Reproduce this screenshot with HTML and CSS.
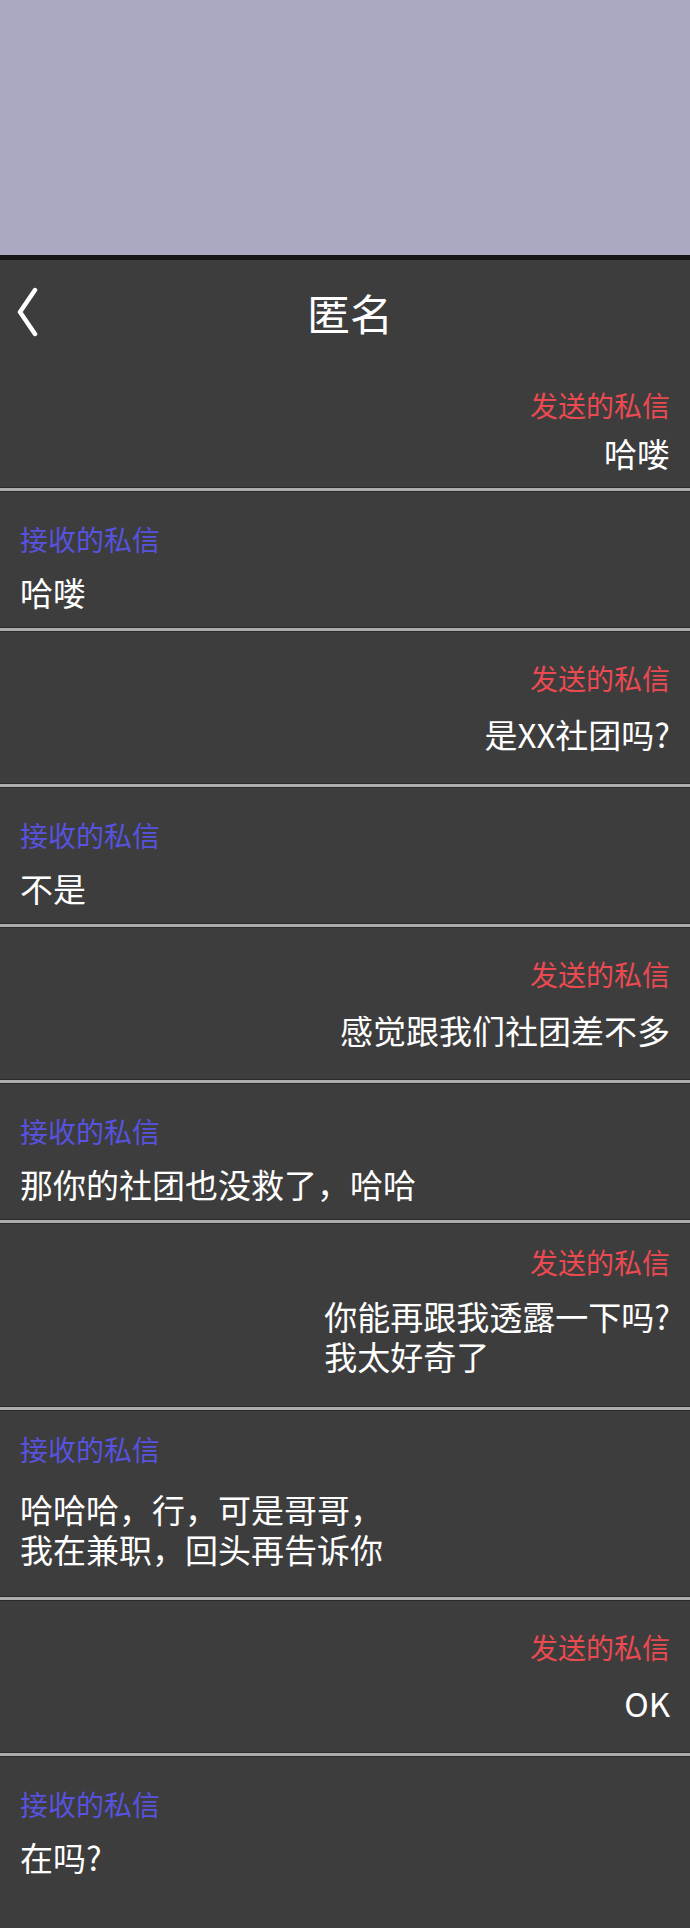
FILE: index.html
```html
<!DOCTYPE html>
<html lang="zh-CN">
<head>
    <meta charset="UTF-8">
    <meta name="viewport" content="width=device-width, initial-scale=1.0">
    <title>匿名</title>
    <link rel="stylesheet" href="styles.css">
</head>
<body>
    <div class="status-area"></div>
    <div class="chat">
        <div class="topbar">
            <a class="back" href="#">
                <svg width="24" height="50" viewBox="0 0 24 50">
                    <polyline points="18,3 3,25 18,47" fill="none" stroke="#ffffff" stroke-width="4.5" stroke-linecap="round" stroke-linejoin="round"/>
                </svg>
            </a>
            <div class="title">匿名</div>
            <div></div>
        </div>

        <div class="msg sent first">
            <div class="msg-label">发送的私信</div>
            <div class="msg-text">哈喽</div>
        </div>
        <hr class="divider">
        <div class="msg received">
            <div class="msg-label">接收的私信</div>
            <div class="msg-text">哈喽</div>
        </div>
        <hr class="divider">
        <div class="msg sent">
            <div class="msg-label">发送的私信</div>
            <div class="msg-text">是XX社团吗?</div>
        </div>
        <hr class="divider">
        <div class="msg received">
            <div class="msg-label">接收的私信</div>
            <div class="msg-text">不是</div>
        </div>
        <hr class="divider">
        <div class="msg sent">
            <div class="msg-label">发送的私信</div>
            <div class="msg-text">感觉跟我们社团差不多</div>
        </div>
        <hr class="divider">
        <div class="msg received">
            <div class="msg-label">接收的私信</div>
            <div class="msg-text">那你的社团也没救了，哈哈</div>
        </div>
        <hr class="divider">
        <div class="msg sent multi">
            <div class="msg-label">发送的私信</div>
            <div class="msg-text">你能再跟我透露一下吗?<br>我太好奇了</div>
        </div>
        <hr class="divider">
        <div class="msg received multi">
            <div class="msg-label">接收的私信</div>
            <div class="msg-text">哈哈哈，行，可是哥哥，<br>我在兼职，回头再告诉你</div>
        </div>
        <hr class="divider">
        <div class="msg sent">
            <div class="msg-label">发送的私信</div>
            <div class="msg-text">OK</div>
        </div>
        <hr class="divider">
        <div class="msg received last">
            <div class="msg-label">接收的私信</div>
            <div class="msg-text">在吗?</div>
        </div>
    </div>
</body>
</html>
```

FILE: styles.css
```css
body {
    margin: 0;
    padding: 0;
    background-color: #3d3d3d;
    color: #ffffff;
    font-family: "Noto Sans CJK SC", "Noto Sans", sans-serif;
}
.status-area {
    height: 255px;
    background-color: #a9aac2;
    border-bottom: 5px solid #161616;
}
.chat {
    background-color: #3d3d3d;
}
.topbar {
    display: grid;
    grid-template-columns: 1fr auto 1fr;
    align-items: center;
    height: 104px;
}
.topbar .back {
    display: flex;
    align-items: center;
    padding-left: 17px;
}
.topbar .title {
    font-size: 43px;
    line-height: 50px;
    padding-left: 10px;
}
.msg {
    display: flex;
    flex-direction: column;
    padding: 0 20px;
}
.msg-label {
    font-size: 28px;
    line-height: 36px;
}
.msg-text {
    font-size: 33px;
    line-height: 40px;
}
.msg.sent {
    align-items: flex-end;
    padding-top: 28px;
    padding-bottom: 29px;
    gap: 18px;
}
.msg.sent .msg-label {
    color: #ea4a50;
}
.msg.received {
    align-items: flex-start;
    padding-top: 29px;
    padding-bottom: 15px;
    gap: 15px;
}
.msg.received .msg-label {
    color: #5753df;
}
.msg.sent.first {
    padding-top: 23px;
    padding-bottom: 14px;
    gap: 10px;
}
.msg.sent.multi {
    padding-top: 20px;
    padding-bottom: 30px;
    gap: 16px;
}
.msg.received.multi {
    padding-top: 20px;
    padding-bottom: 27px;
    gap: 22px;
}
.msg.last {
    padding-bottom: 60px;
}
.divider {
    margin: 0;
    height: 3px;
    border: none;
    border-top: 1px solid #2b2b2b;
    border-bottom: 1px solid #2b2b2b;
    background-color: #adadad;
}
```
